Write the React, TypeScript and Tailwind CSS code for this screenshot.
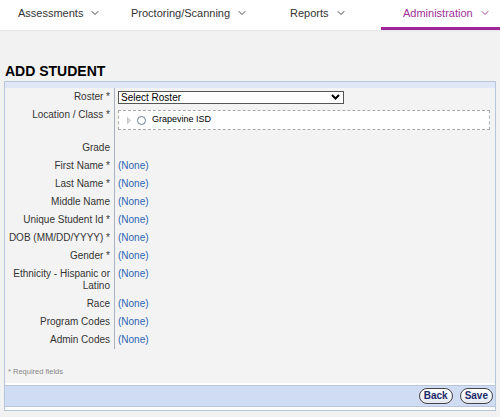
import { ChevronDown } from "lucide-react"

const tabs = [
  { name: "Assessments", w: "w-[116px] pl-[18px]" },
  { name: "Proctoring/Scanning", w: "w-[144px] pl-[15px]" },
  { name: "Reports", w: "w-[121px] pl-[30px]" },
  { name: "Administration", w: "w-[119px] pl-[22px]", active: true }
]

const fields = [
  "First Name *",
  "Last Name *",
  "Middle Name",
  "Unique Student Id *",
  "DOB (MM/DD/YYYY) *",
  "Gender *",
  "Ethnicity - Hispanic or Latino",
  "Race",
  "Program Codes",
  "Admin Codes"
]

function Label({ children, className = "" }: { children: React.ReactNode; className?: string }) {
  return (
    <div className={`w-[110px] shrink-0 border-r border-[#aab2c0] pr-[4px] text-right text-[10px] leading-[12px] text-[#333] ${className}`}>
      {children}
    </div>
  )
}

export default function App() {
  return (
    <div className="h-[417px] w-[500px] overflow-hidden bg-[#f2f2f2] font-['Liberation_Sans',Arial,sans-serif]">
      <nav className="flex h-[30px] bg-white shadow-[0_1px_2px_rgba(0,0,0,0.06)]">
        {tabs.map(t => (
          <div
            key={t.name}
            className={`${t.w} flex items-center gap-[6px] border-b-[3px] pb-[1px] text-[11px] ${
              t.active ? "border-[#a0249a] text-[#a0309a]" : "border-transparent text-[#333]"
            }`}
          >
            <span>{t.name}</span>
            <ChevronDown size={12} strokeWidth={1.8} />
          </div>
        ))}
      </nav>

      <h1 className="mt-[33px] pl-[5px] text-[14px] font-bold leading-[16px] text-black">ADD STUDENT</h1>

      <div className="mx-[4px] mt-[2px] border border-[#b8c6dc] bg-white">
        <div className="h-[6px] bg-[#e0e8f8]" />
        <div className="bg-[#f3f3f3] pb-[6px]">
          <div className="flex items-center">
            <Label className="py-[3px]">Roster *</Label>
            <div className="pl-[3px]">
              <div className="flex h-[13px] w-[226px] items-center justify-between border border-[#555] bg-white pl-[2px] pr-[3px] text-[10px] leading-[11px] text-black">
                <span>Select Roster</span>
                <svg width="9" height="6" viewBox="0 0 9 6">
                  <path d="M1 1l3.5 3.5L8 1" fill="none" stroke="#000" strokeWidth="2" />
                </svg>
              </div>
            </div>
          </div>
          <div className="flex">
            <Label className="pt-[3px] pb-[18px]">Location / Class *</Label>
            <div className="flex-1 pl-[3px] pr-[5px] pt-[4px]">
              <div className="flex h-[20px] items-center border border-dashed border-[#aaa] bg-white pl-[8px] text-[9px] text-black">
                <svg width="4" height="7" viewBox="0 0 4 7" className="mr-[6px]">
                  <path d="M0.5 0.5L3.5 3.5L0.5 6.5Z" fill="#ddd" stroke="#aaa" strokeWidth="0.6" />
                </svg>
                <span className="mr-[6px] inline-block h-[9px] w-[9px] rounded-full border border-[#6b7c90] bg-white" />
                <span>Grapevine ISD</span>
              </div>
            </div>
          </div>
          <div className="flex">
            <Label className="py-[3px]">Grade</Label>
          </div>
          {fields.map(f => (
            <div key={f} className="flex">
              <Label className="py-[3px]">{f}</Label>
              <div className="py-[3px] pl-[3px] text-[10px] leading-[12px] text-[#2b64b3]">(None)</div>
            </div>
          ))}
          <div className="mt-[18px] pl-[3px] text-[7.5px] leading-[10px] text-[#888]">* Required fields</div>
        </div>
        <div className="border-t-[2px] border-white">
          <div className="flex h-[22px] items-center justify-end gap-[7px] border-y border-[#b8c6dc] bg-[#d0dcf4] pr-[2px]">
            <button className="h-[16px] rounded-full border-[1.5px] border-[#444] bg-gradient-to-b from-white to-[#e4e8f0] px-[4px] text-[10px] font-bold leading-[12px] text-[#1d2b6b]">
              Back
            </button>
            <button className="h-[16px] rounded-full border-[1.5px] border-[#444] bg-gradient-to-b from-white to-[#e4e8f0] px-[4px] text-[10px] font-bold leading-[12px] text-[#1d2b6b]">
              Save
            </button>
          </div>
          <div className="h-[3px] bg-white" />
        </div>
      </div>
    </div>
  )
}
